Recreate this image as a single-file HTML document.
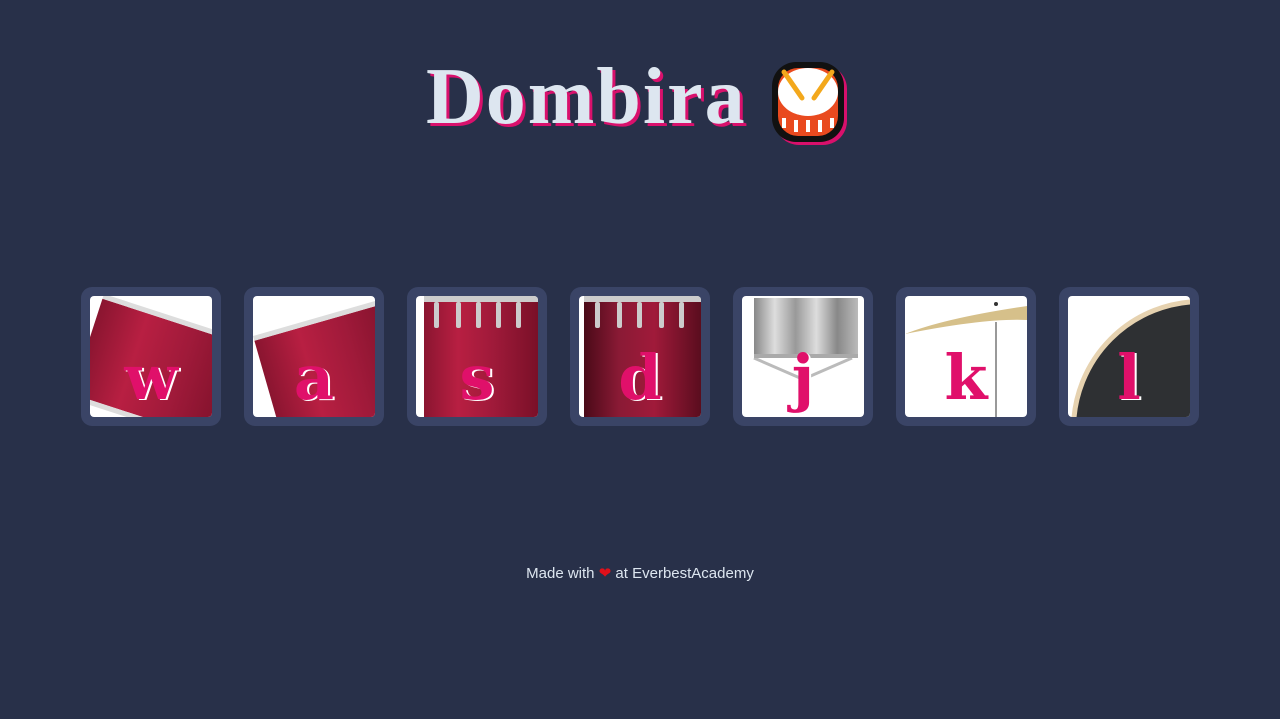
<!DOCTYPE html>
<html><head><meta charset="utf-8"><style>
html,body{margin:0;padding:0;width:1280px;height:719px;background:#283049;overflow:hidden;font-family:"Liberation Sans",sans-serif}
h1{position:absolute;left:426px;top:52px;margin:0;font-family:"Liberation Serif",serif;font-weight:bold;font-size:80px;color:#dde6f0;text-shadow:3px 3px 0 #d9106c;letter-spacing:2px}
.emo{position:absolute;left:770px;top:60px}
.key{position:absolute;top:287px;width:140px;height:139px;background:#3a4466;border-radius:11px}
.in{position:absolute;left:9px;top:9px;width:122px;height:121px;background:#fff;border-radius:4px;overflow:hidden}
.ltr{position:absolute;left:0;right:0;top:47px;text-align:center;font-family:"DejaVu Serif",serif;font-weight:bold;font-size:62px;line-height:70px;color:#e0106a;text-shadow:2px 1px 0 #fff}
.red{position:absolute;background:linear-gradient(90deg,#8a1530,#b81f42 30%,#a01a3a 60%,#7a1028)}
.lug{position:absolute;width:5px;height:26px;background:#ccc;border-radius:2px}
footer{position:absolute;left:0;right:0;top:564px;text-align:center;color:#dde6f0;font-size:15px}
</style></head><body>
<h1>Dombira</h1>
<svg class="emo" width="82" height="88" viewBox="0 0 82 88">
<rect x="5" y="5" width="72" height="80" rx="24" fill="#d9106c"/>
<rect x="2" y="2" width="72" height="80" rx="24" fill="#111"/>
<rect x="8" y="8" width="60" height="68" rx="20" fill="#e94a1f"/>
<ellipse cx="38" cy="32" rx="30" ry="24" fill="#fff"/>
<path d="M14 58v10M26 60v12M38 60v12M50 60v12M62 58v10" stroke="#fff" stroke-width="4"/>
<path d="M14 12L32 38M62 12L44 38" stroke="#f3a81c" stroke-width="5" stroke-linecap="round"/>
</svg>

<div class="key" style="left:81px"><div class="in">
<div class="red" style="width:160px;height:100px;transform:rotate(18deg);transform-origin:0 0;left:14px;top:-2px;border-top:5px solid #ddd;border-bottom:5px solid #ddd"></div>
<div class="ltr">w</div></div></div>

<div class="key" style="left:244px"><div class="in">
<div class="red" style="left:0;top:40px;width:150px;height:110px;transform:rotate(-16deg);transform-origin:0 0;border-top:5px solid #ddd"></div>
<div class="ltr">a</div></div></div>

<div class="key" style="left:407px"><div class="in">
<div class="red" style="left:8px;top:0;width:114px;height:121px;border-top:6px solid #ccc"></div>
<div class="lug" style="left:18px;top:6px"></div><div class="lug" style="left:40px;top:6px"></div><div class="lug" style="left:60px;top:6px"></div><div class="lug" style="left:80px;top:6px"></div><div class="lug" style="left:100px;top:6px"></div>
<div class="ltr">s</div></div></div>

<div class="key" style="left:570px"><div class="in">
<div class="red" style="left:5px;top:0;width:117px;height:121px;border-top:6px solid #ccc;background:linear-gradient(90deg,#4a0a18,#8a1a35 30%,#a01a3a 60%,#5a0d1e)"></div>
<div class="lug" style="left:16px;top:6px"></div><div class="lug" style="left:38px;top:6px"></div><div class="lug" style="left:58px;top:6px"></div><div class="lug" style="left:80px;top:6px"></div><div class="lug" style="left:100px;top:6px"></div>
<div class="ltr">d</div></div></div>

<div class="key" style="left:733px"><div class="in">
<div style="position:absolute;left:12px;top:2px;width:104px;height:56px;background:linear-gradient(90deg,#888,#ddd 20%,#999 40%,#ddd 60%,#888 80%,#bbb)"></div>
<svg style="position:absolute;left:0;top:0" width="122" height="121"><path d="M12 62L58 82M110 62L64 82" stroke="#bbb" stroke-width="3"/><path d="M12 60H116" stroke="#aaa" stroke-width="4"/></svg>
<div class="ltr">j</div></div></div>

<div class="key" style="left:896px"><div class="in">
<svg style="position:absolute;left:0;top:0" width="122" height="121"><path d="M0 38Q40 22 122 10L122 24Q80 22 0 38Z" fill="#d6c08a"/><path d="M91 26V121" stroke="#999" stroke-width="2"/><circle cx="91" cy="8" r="2" fill="#333"/></svg>
<div class="ltr">k</div></div></div>

<div class="key" style="left:1059px"><div class="in">
<div style="position:absolute;width:250px;height:250px;border-radius:50%;background:#2e3033;border:5px solid #e6d2b0;left:3px;top:3px"></div>
<div class="ltr">l</div></div></div>

<footer>Made with <span style="color:#e0101a">❤</span> at EverbestAcademy</footer>
</body></html>
